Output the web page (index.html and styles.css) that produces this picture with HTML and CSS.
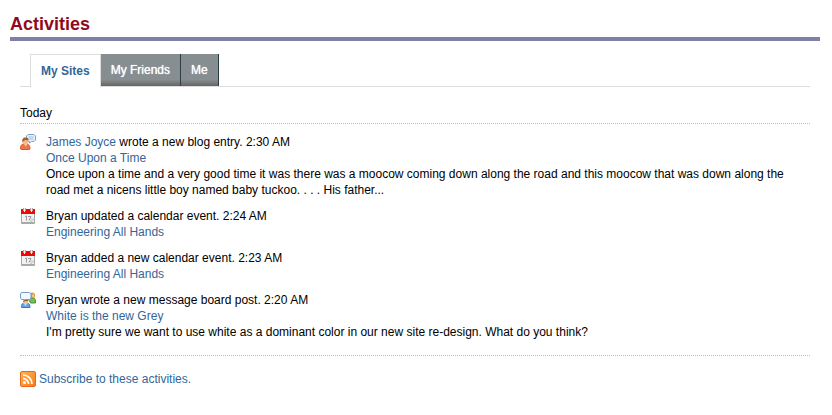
FILE: index.html
```html
<!DOCTYPE html>
<html lang="en">
<head>
<meta charset="utf-8">
<title>Activities</title>
<link rel="stylesheet" href="styles.css">
</head>
<body>
<svg class="sprite" aria-hidden="true">
  <symbol id="calendar" viewBox="0 0 16 16">
    <rect x="1" y="5" width="14" height="11" rx="1" fill="#a9a9a9"/>
    <rect x="2" y="5" width="12" height="9" fill="#f2f2f2"/>
    <path d="M1 1h14v5H1z" fill="#ee0808"/>
    <path d="M3 0h3v3H3zM10 0h3v3h-3z" fill="#c99a9a"/>
    <path d="M4 0h1v4H4zM11 0h1v4h-1z" fill="#eee"/>
    <path d="M5 8.500l1.500-.5v4.500M8 8.500h3l-2 4" fill="none" stroke="#999"/>
    <path d="M11 14v-3h3z" fill="#fff" stroke="#c4c4c4"/>
  </symbol>
</svg>
<main class="portlet">
  <h1 class="title">Activities</h1>
  <div class="content">
    <nav class="tabs">
      <a class="tab active" href="#sites" aria-current="page">My Sites</a>
      <a class="tab" href="#friends">My Friends</a>
      <a class="tab" href="#me">Me</a>
    </nav>
    <h2 class="day">Today</h2>
    <ul class="feed">
      <li class="entry">
        <svg class="icon" viewBox="0 0 16 16" aria-hidden="true">
          <path d="M8 .5h6l1.500 1.500v4L14 7.500h-2.500L9.500 9V7.500H8L6.500 6V2z" fill="#e8f2fc" stroke="#7e9fc8"/>
          <path d="M8.500 3h5M8.500 5h5" stroke="#9dbbe0"/>
          <path d="M.5 15c0-4 1-5 4.500-5s5 1 5 5l-2 .5H2z" fill="#ee7444" stroke="#d4572e"/>
          <path d="M4 10h3l-1 2.500z" fill="#fbd9bd"/>
          <circle cx="5.500" cy="7.500" r="3" fill="#f5bd85"/>
          <path d="M2.500 8c-1-3 1-5 3.500-4.500 2 0 3 1.500 2.500 3L5 6z" fill="#a55f35"/>
        </svg>
        <div class="body">
          <p><a href="#james">James Joyce</a> wrote a new blog entry. 2:30 AM</p>
          <p><a href="#once">Once Upon a Time</a></p>
          <p>Once upon a time and a very good time it was there was a moocow coming down along the road and this moocow that was down along the road met a nicens little boy named baby tuckoo. . . . His father...</p>
        </div>
      </li>
      <li class="entry">
        <svg class="icon" aria-hidden="true"><use href="#calendar"/></svg>
        <div class="body">
          <p>Bryan updated a calendar event. 2:24 AM</p>
          <p><a href="#event">Engineering All Hands</a></p>
        </div>
      </li>
      <li class="entry">
        <svg class="icon" aria-hidden="true"><use href="#calendar"/></svg>
        <div class="body">
          <p>Bryan added a new calendar event. 2:23 AM</p>
          <p><a href="#event">Engineering All Hands</a></p>
        </div>
      </li>
      <li class="entry">
        <svg class="icon" viewBox="0 0 16 16" aria-hidden="true">
          <circle cx="12" cy="3.500" r="3" fill="#d99a48"/>
          <path d="M12 2.500h2v4h-2z" fill="#f4c779"/>
          <path d="M8.500 7l2-1h3.500l1.500 2v3h-5z" fill="#76bb58" stroke="#4f963c"/>
          <path d="M1.500.5h8L11 2v4L9.500 7.500H6L4.500 9V7.500h-3L.5 6V2z" fill="#f3f9ff" stroke="#6f9bd1"/>
          <path d="M1.500 15.500c0-3.500.5-4.500 4-4.500s4.500 1 4.500 4.500z" fill="#62a5ec" stroke="#3775c6"/>
          <circle cx="5.500" cy="10" r="2.500" fill="#f4c590"/>
          <path d="M3 10c0-3 5-3.500 5.500-.5L6 9z" fill="#985f38"/>
          <path d="M4.500 12.500h2l-1 1.500z" fill="#fff"/>
        </svg>
        <div class="body">
          <p>Bryan wrote a new message board post. 2:20 AM</p>
          <p><a href="#grey">White is the new Grey</a></p>
          <p>I'm pretty sure we want to use white as a dominant color in our new site re-design. What do you think?</p>
        </div>
      </li>
    </ul>
    <footer class="footer">
      <a class="subscribe" href="#rss">
        <svg class="icon" viewBox="0 0 16 16" aria-hidden="true">
          <defs>
            <linearGradient id="rss" x1="0" y1="0" x2="1" y2="1">
              <stop offset="0" stop-color="#ffb450"/>
              <stop offset="1" stop-color="#f67c1c"/>
            </linearGradient>
          </defs>
          <rect x=".5" y=".5" width="15" height="15" rx="1.500" fill="url(#rss)" stroke="#e8671c"/>
          <circle cx="4.500" cy="11.500" r="1.500" fill="#fff"/>
          <path d="M3 7.500c3 0 5.500 2.500 5.500 5.500M3 4c5 0 9 4 9 9" fill="none" stroke="#fff" stroke-width="1.700"/>
        </svg>
        Subscribe to these activities.
      </a>
    </footer>
  </div>
</main>
</body>
</html>
```

FILE: styles.css
```css
* {
  box-sizing: border-box;
}

body {
  margin: 0;
  background: #fff;
  color: #000;
  font: 12px/16px "Liberation Sans", Arial, sans-serif;
}

a {
  color: #336699;
  text-decoration: none;
}

p {
  margin: 0;
}

.sprite {
  display: none;
}

.portlet {
  padding: 12px 12px 24px 10px;
}

.title {
  margin: 0;
  padding-bottom: 1px;
  border-bottom: 4px solid #8080a6;
  color: #8f0a20;
  font-size: 18px;
  line-height: 24px;
}

.content {
  padding: 13px 10px 0;
}

.tabs {
  display: flex;
  padding-left: 10px;
  border-bottom: 1px solid #ddd;
}

.tab {
  height: 32px;
  padding: 0 10px;
  border-right: 1px solid #2b3c44;
  background: linear-gradient(#878e91 80%, #666462);
  color: #fff;
  line-height: 32px;
  text-shadow: 0 0 1px #fff;
}

.tab.active {
  height: 33px;
  margin-bottom: -1px;
  border: 1px solid #ddd;
  border-width: 1px 1px 0;
  background: #fff;
  color: #336699;
  font-weight: bold;
  text-shadow: none;
}

.day {
  margin: 18px 0 10px;
  padding-bottom: 2px;
  border-bottom: 1px dotted #bbb;
  font-size: 12px;
  font-weight: normal;
}

.feed {
  display: flex;
  flex-direction: column;
  gap: 10px;
  margin: 0;
  padding: 0;
  list-style: none;
}

.entry {
  display: flex;
  gap: 10px;
}

.icon {
  flex: none;
  width: 16px;
  height: 16px;
}

.footer {
  margin-top: 15px;
  padding-top: 15px;
  border-top: 1px dotted #bbb;
}

.subscribe {
  display: inline-flex;
  align-items: center;
  gap: 3px;
}
```
